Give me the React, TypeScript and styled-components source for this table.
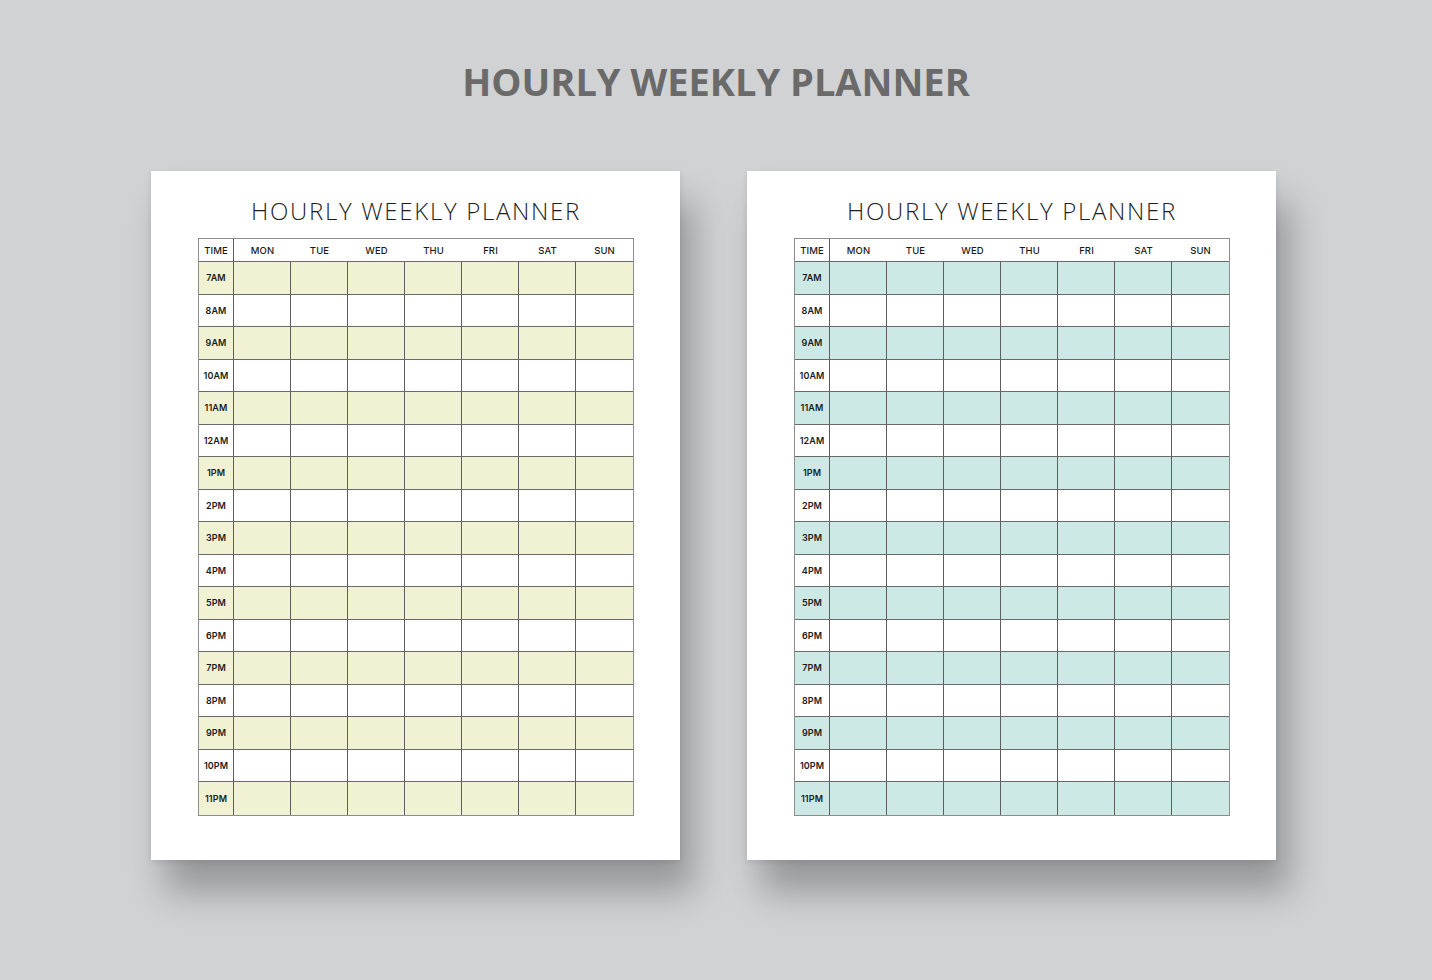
import React from "react";
import styled, { createGlobalStyle } from "styled-components";

const Global = createGlobalStyle`
  html, body { margin: 0; padding: 0; background: #d1d2d4; }
  #root { min-height: 980px; }
`;

const Screen = styled.div`
  width: 1432px;
  height: 980px;
  background: #d1d2d4;
  display: flex;
  flex-direction: column;
  align-items: center;
  overflow: hidden;
`;

const MainTitle = styled.h1`
  margin: 0;
  padding-top: 59px;
  height: 171px;
  box-sizing: border-box;
  font-family: "Open Sans", "Liberation Sans", sans-serif;
  font-weight: 700;
  font-size: 38px;
  line-height: 44px;
  color: #6a6a6b;
  letter-spacing: 0;
`;

const Pages = styled.div`
  display: flex;
  gap: 67px;
  padding-right: 5px;
`;

const Page = styled.div`
  width: 529px;
  height: 689px;
  background: #ffffff;
  box-sizing: border-box;
  padding: 24px 46px 0 47px;
  display: flex;
  flex-direction: column;
  align-items: stretch;
  box-shadow: 14px 32px 34px rgba(0, 0, 0, 0.28), 0 2px 6px rgba(0, 0, 0, 0.1);
`;

const PageTitle = styled.div`
  text-align: center;
  font-family: "Open Sans", "Liberation Sans", sans-serif;
  font-weight: 300;
  font-size: 24px;
  line-height: 32px;
  letter-spacing: 1.7px;
  color: #1e1e1e;
  height: 43px;
`;

const Grid = styled.div`
  display: grid;
  grid-template-columns: 35px repeat(7, 1fr);
  grid-template-rows: 23px repeat(17, 32.5px);
  border: 1px solid #8d8d8d;
  box-sizing: border-box;
  width: 436px;
`;

const Cell = styled.div<{ $fill?: string; $last?: boolean; $lastRow?: boolean; $first?: boolean }>`
  background: ${(p) => p.$fill || "#ffffff"};
  border-right: ${(p) => (p.$last ? "none" : "1px solid #5e5e5e")};
  border-bottom: ${(p) => (p.$lastRow ? "none" : "1px solid #6a6a6a")};
  display: flex;
  align-items: center;
  justify-content: center;
  font-family: "Inter", "Liberation Sans", sans-serif;
  font-weight: 600;
  font-size: 9px;
  color: #1a1a1a;
  letter-spacing: 0.1px;
  box-sizing: border-box;
`;

const HeadCell = styled(Cell)`
  font-weight: 500;
  font-size: 9.5px;
  border-right: ${(p) => (p.$first ? "1px solid #5e5e5e" : "none")};
  border-bottom: 1px solid #6a6a6a;
`;

const days = ["MON", "TUE", "WED", "THU", "FRI", "SAT", "SUN"];
const hours = [
  "7AM", "8AM", "9AM", "10AM", "11AM", "12AM", "1PM", "2PM", "3PM",
  "4PM", "5PM", "6PM", "7PM", "8PM", "9PM", "10PM", "11PM",
];

function Planner({ tint }: { tint: string }) {
  return (
    <Page>
      <PageTitle>HOURLY WEEKLY PLANNER</PageTitle>
      <Grid>
        <HeadCell $first>TIME</HeadCell>
        {days.map((d) => (
          <HeadCell key={d}>{d}</HeadCell>
        ))}
        {hours.map((h, r) => {
          const fill = r % 2 === 0 ? tint : "#ffffff";
          const lastRow = r === hours.length - 1;
          return (
            <React.Fragment key={h}>
              <Cell $fill={fill} $lastRow={lastRow}>{h}</Cell>
              {days.map((d, c) => (
                <Cell key={d} $fill={fill} $lastRow={lastRow} $last={c === 6} />
              ))}
            </React.Fragment>
          );
        })}
      </Grid>
    </Page>
  );
}

export default function App() {
  return (
    <Screen>
      <Global />
      <MainTitle>HOURLY WEEKLY PLANNER</MainTitle>
      <Pages>
        <Planner tint="#f1f1d3" />
        <Planner tint="#cde9e6" />
      </Pages>
    </Screen>
  );
}
